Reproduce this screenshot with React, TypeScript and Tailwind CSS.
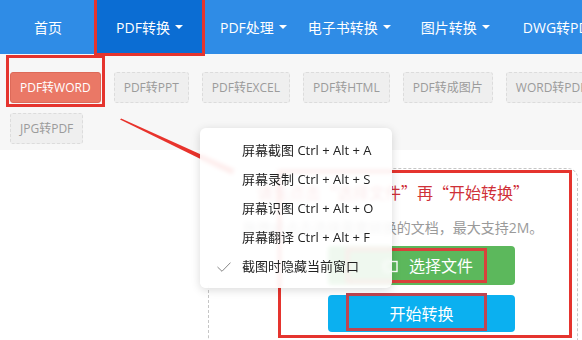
function Caret() {
  return <span className="ml-[5px] inline-block w-0 h-0 border-l-[4px] border-r-[4px] border-t-[4px] border-l-transparent border-r-transparent border-t-white" />;
}

function Tab({ label, active }: { label: string; active?: boolean }) {
  return (
    <div
      className={
        active
          ? "h-[31px] px-[9px] shrink-0 flex items-center rounded-[3px] text-[12px] bg-[#ea7866] border border-[#dd6a59] text-white"
          : "h-[31px] px-[9px] shrink-0 flex items-center rounded-[3px] text-[12px] bg-[#efefef] border border-dashed border-[#dcdcdc] text-[#9b9b9b]"
      }
    >
      {label}
    </div>
  );
}

const menuItems = [
  "屏幕截图 Ctrl + Alt + A",
  "屏幕录制 Ctrl + Alt + S",
  "屏幕识图 Ctrl + Alt + O",
  "屏幕翻译 Ctrl + Alt + F",
];

export default function App() {
  return (
    <div className="w-[582px] h-[340px] overflow-hidden relative bg-white font-['Open_Sans','Noto_Sans_CJK_SC',sans-serif]">
      {/* top nav */}
      <div className="h-[54px] flex items-stretch bg-[#2f8ce6] text-white text-[14px] whitespace-nowrap overflow-hidden">
        <div className="w-[96px] shrink-0 flex items-center justify-center">首页</div>
        <div className="w-[107px] shrink-0 flex items-center justify-center bg-[#0b6dd3]">
          PDF转换
          <Caret />
        </div>
        <div className="ml-[17px] shrink-0 flex items-center">
          PDF处理
          <Caret />
        </div>
        <div className="ml-[21px] shrink-0 flex items-center">
          电子书转换
          <Caret />
        </div>
        <div className="ml-[30px] shrink-0 flex items-center">
          图片转换
          <Caret />
        </div>
        <div className="ml-[33px] shrink-0 flex items-center">DWG转PDF</div>
      </div>

      {/* sub tabs */}
      <div className="bg-[#f7f7f7] pt-[18px] pb-[6px] pl-[10px] flex flex-col gap-[10px] overflow-hidden">
        <div className="flex gap-[13px] whitespace-nowrap">
          <Tab label="PDF转WORD" active />
          <Tab label="PDF转PPT" />
          <Tab label="PDF转EXCEL" />
          <Tab label="PDF转HTML" />
          <Tab label="PDF转成图片" />
          <Tab label="WORD转PDF" />
        </div>
        <div className="flex gap-[13px] whitespace-nowrap">
          <Tab label="JPG转PDF" />
        </div>
      </div>

      {/* upload area */}
      <div className="pt-[18px] pl-[208px]">
        <div className="w-[370px] h-[200px] border border-dashed border-[#c6c6c6] rounded-[10px] pt-[12px] flex flex-col items-center">
          <div className="font-['Noto_Sans_CJK_SC',sans-serif] text-[16px] leading-[22px] text-[#cf3038] whitespace-nowrap">请先点击“选择文件”再“开始转换”</div>
          <div className="mt-[15px] text-[14px] leading-[20px] text-[#9a9a9a] whitespace-nowrap">拖拽或点击选择需要转换的文档，最大支持2M。</div>
          <div className="self-start ml-[119px] mt-[8px] w-[187px] h-[39px] rounded-[4px] bg-[#5cb85c] text-white text-[16px] flex items-center pl-[53px] gap-[11px]">
            <svg width="17" height="14" viewBox="0 0 17 14" fill="none" stroke="white" strokeWidth="1.4">
              <rect x="4" y="2.5" width="12" height="10" />
              <path d="M1 7 H4" />
            </svg>
            选择文件
          </div>
          <div className="self-start ml-[119px] mt-[10px] w-[187px] h-[37px] rounded-[4px] bg-[#0bb0f0] text-white text-[16px] flex items-center justify-center">
            开始转换
          </div>
        </div>
      </div>

      {/* annotation arrow */}
      <svg className="absolute left-0 top-0 pointer-events-none" width="582" height="340">
        <polygon points="120,119.6 121.2,118.4 234.2,169.6 232.2,174.4" fill="#e8332c" />
      </svg>

      {/* annotation boxes */}
      <div className="absolute left-[94px] top-[-3px] w-[111px] h-[59px] border-[3px] border-[#e5342e]" />
      <div className="absolute left-[6px] top-[55px] w-[99px] h-[52px] border-[3px] border-[#e5342e]" />
      <div className="absolute left-[278px] top-[170px] w-[294px] h-[168px] border-[3px] border-[#e5342e]" />
      <div className="absolute left-[346px] top-[248px] w-[141px] h-[35px] border-[3px] border-[#d8413b]" />
      <div className="absolute left-[346px] top-[293px] w-[141px] h-[38px] border-[3px] border-[#bf4551]" />

      {/* context menu */}
      <div className="absolute left-[200px] top-[128px] w-[192px] h-[160px] rounded-[6px] bg-white/90 backdrop-blur-[2px] shadow-[0_2px_10px_rgba(0,0,0,0.15)] pt-[8px] text-[13px] text-[#222]">
        {menuItems.map((t) => (
          <div key={t} className="h-[29px] pl-[42px] flex items-center whitespace-nowrap">
            {t}
          </div>
        ))}
        <div className="h-[29px] pl-[17px] flex items-center whitespace-nowrap">
          <svg width="14" height="10" viewBox="0 0 14 10" fill="none" stroke="#777" strokeWidth="0.9">
            <path d="M0.5 5 L5 9.3 L13.5 0.6" />
          </svg>
          <span className="ml-[11px]">截图时隐藏当前窗口</span>
        </div>
      </div>
    </div>
  );
}
